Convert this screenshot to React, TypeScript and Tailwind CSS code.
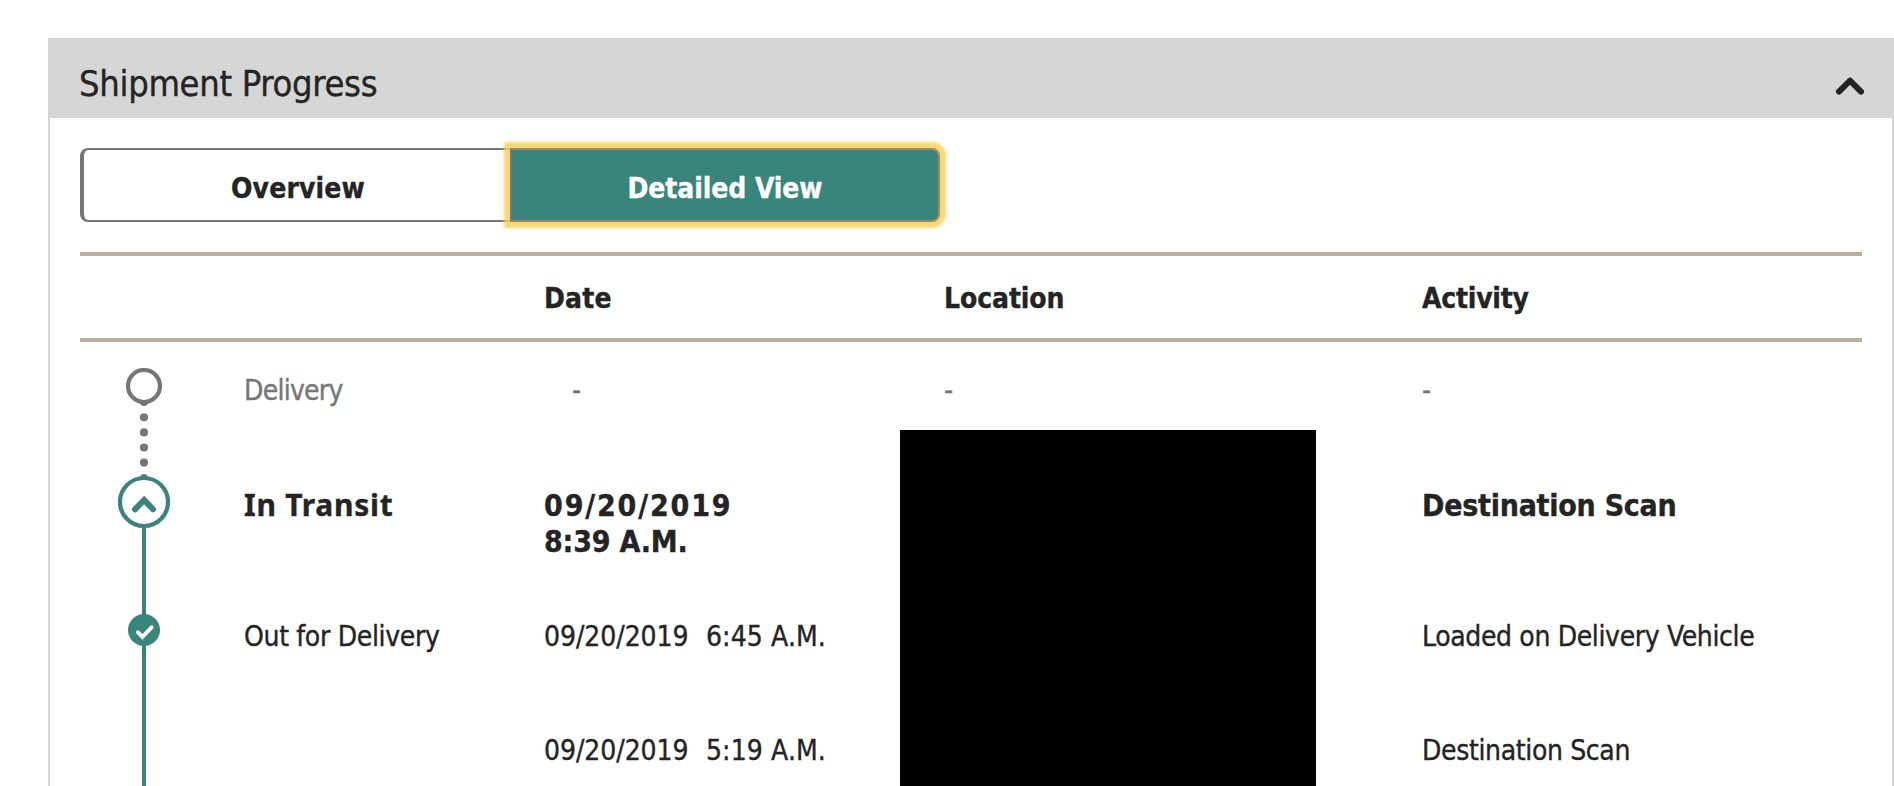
import { useState } from "react";

type Scan = {
  status?: string;
  date: string;
  time: string;
  activity: string;
};

const scans: Scan[] = [
  { status: "Out for Delivery", date: "09/20/2019", time: "6:45 A.M.", activity: "Loaded on Delivery Vehicle" },
  { date: "09/20/2019", time: "5:19 A.M.", activity: "Destination Scan" },
];

const ChevronUp = () => (
  <svg className="w-8 h-6" viewBox="0 0 32 24" fill="none" stroke="#242424" strokeWidth="6" strokeLinecap="round" strokeLinejoin="round">
    <path d="M5 17.6 L16 6.6 L27 17.6" />
  </svg>
);

// Left rail: pending dot, expanded "In Transit" marker, completed check
const Timeline = () => (
  <div className="w-32 flex flex-col items-center shrink-0 pt-[26px]">
    <svg className="w-[52px] h-[418px]" viewBox="0 0 52 418" fill="none">
      <g fill="#767676">
        <circle cx="26" cy="34" r="4" />
        <circle cx="26" cy="49.3" r="4.1" />
        <circle cx="26" cy="64.4" r="4.1" />
        <circle cx="26" cy="79.5" r="4.1" />
        <circle cx="26" cy="94.6" r="4.1" />
        <circle cx="26" cy="110" r="4" />
      </g>
      <circle cx="26" cy="18" r="16" fill="#fff" stroke="#767676" strokeWidth="4.2" />
      <path d="M26 158 V418" stroke="#39847b" strokeWidth="4" />
      <circle cx="26" cy="134" r="24" fill="#fff" stroke="#39847b" strokeWidth="4.2" />
      <path d="M17 141.3 L26.2 132 L35 141.3" stroke="#39847b" strokeWidth="6" strokeLinecap="round" />
      <circle cx="26" cy="262" r="16" fill="#39847b" />
      <path d="M20 264.3 L24.4 268.8 L33.6 259.3" stroke="#fff" strokeWidth="4" strokeLinecap="round" />
    </svg>
  </div>
);

export default function App() {
  const [view, setView] = useState<"overview" | "detailed">("detailed");

  return (
    <div className="h-[786px] overflow-hidden bg-white pl-12 pt-[38px] font-['DejaVu_Sans_Condensed','DejaVu_Sans',sans-serif] text-[28px] leading-9 text-[#242424] [-webkit-text-stroke:0.35px]">
      <div className="relative h-[800px] border-x-2 border-[#d6d6d6]">
        <div className="h-20 flex justify-between bg-[#d6d6d6] pl-[29px] pr-[26px]">
          <h2 className="pt-[26px] text-[36px] leading-10 tracking-[-0.32px]">Shipment Progress</h2>
          <button className="h-6 mt-9" aria-label="Collapse">
            <ChevronUp />
          </button>
        </div>

        <div className="px-[30px] pt-[30px]">
          <div className="flex h-[74px] w-[860px] font-bold">
            <button
              onClick={() => setView("overview")}
              className="w-[430px] pt-[7px] pl-0.5 rounded-l-lg border-y-2 border-l-4 border-[#767676] tracking-[0.15px]"
            >
              Overview
            </button>
            <button
              onClick={() => setView("detailed")}
              aria-pressed={view === "detailed"}
              className="w-[430px] pt-[7px] rounded-r-lg border-2 border-[#a08a5c] border-l-[#767676] bg-[#39847b] text-white tracking-[-0.08px] shadow-[0_0_3px_6px_rgba(246,209,98,0.85)]"
            >
              Detailed View
            </button>
          </div>

          <div className="mt-[30px] h-[90px] grid grid-cols-[464px_400px_478px_1fr] border-y-4 border-[#b8aea2] pt-[25px] font-bold">
            <span />
            <span className="tracking-[0.15px]">Date</span>
            <span className="tracking-[-0.1px]">Location</span>
            <span className="tracking-[-0.24px]">Activity</span>
          </div>

          <div className="flex">
            <Timeline />
            <div className="flex-1 pt-[31px]">
              <div className="h-[115px] grid grid-cols-[336px_400px_478px_1fr] text-[#767676]">
                <span className="pl-9 tracking-[-0.74px]">Delivery</span>
                <span className="pl-7">-</span>
                <span>-</span>
                <span>-</span>
              </div>
              <div className="h-[131px] grid grid-cols-[336px_400px_478px_1fr] text-[30px] font-bold">
                <span className="-mt-px pl-9 font-['Noto_Sans',sans-serif] tracking-[0.75px]">In Transit</span>
                <span>
                  <span className="block tracking-[1.85px]">09/20/2019</span>
                  <span className="block tracking-[-0.2px]">8:39 A.M.</span>
                </span>
                <span />
                <span className="tracking-[-0.25px]">Destination Scan</span>
              </div>
              {scans.map((scan) => (
                <div key={scan.time} className="h-[114px] grid grid-cols-[336px_400px_478px_1fr]">
                  <span className="pl-9 tracking-[-0.33px]">{scan.status}</span>
                  <span className="flex">
                    <span className="w-[162px] tracking-[-0.07px]">{scan.date}</span>
                    <span className="tracking-[0.1px]">{scan.time}</span>
                  </span>
                  <span />
                  <span className="whitespace-nowrap tracking-[-0.36px]">{scan.activity}</span>
                </div>
              ))}
            </div>
          </div>
        </div>

        {/* Redacted location */}
        <div className="absolute left-[850px] top-[392px] h-[400px] w-[416px] bg-black" />
      </div>
    </div>
  );
}
